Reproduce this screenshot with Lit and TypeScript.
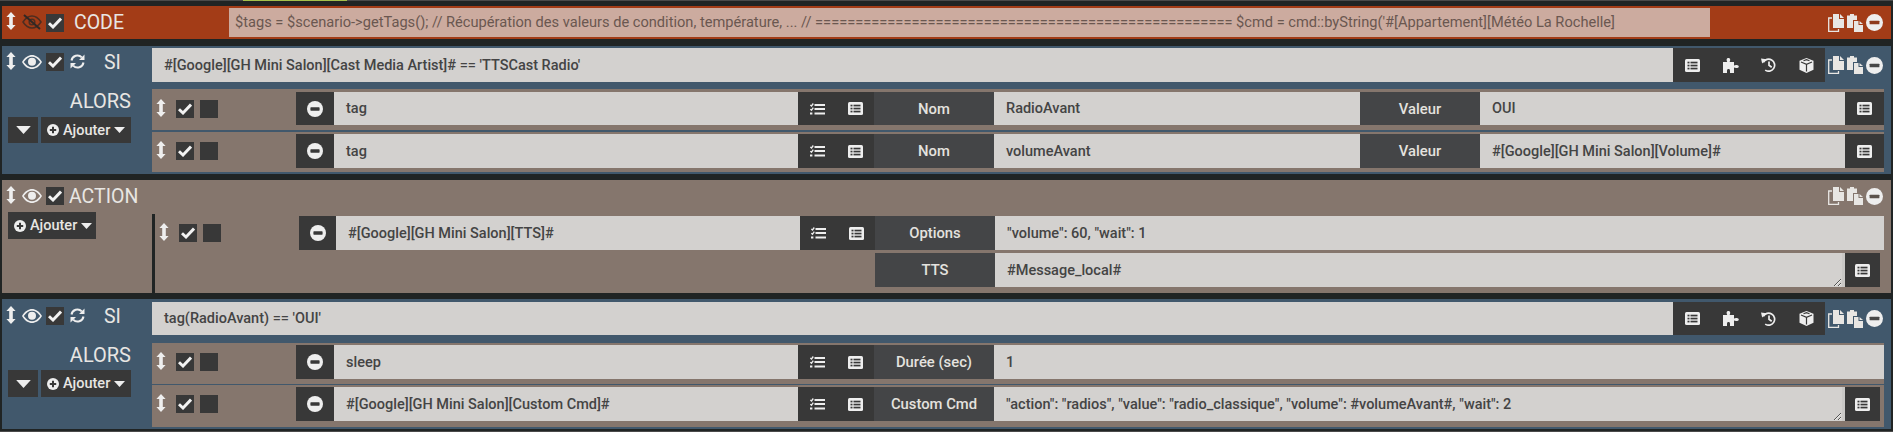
import { LitElement, html, css, svg } from "lit";
import { customElement } from "lit/decorators.js";

const ico = (w: number, h: number, vb: string, body: unknown, cls = "") =>
  html`<svg class="ico ${cls}" width=${w} height=${h} viewBox=${vb}>${body}</svg>`;

const move = () => ico(10, 18, "0 0 10 18", svg`<path fill="#eeeeee" d="M5 0L9.6 5H6.8V13H9.6L5 18L.4 13H3.2V5H.4Z"/>`, "mv");
const eyeBody = (c: string) => svg`<path fill=${c} fill-rule="evenodd" d="M0 7C3 2 6.5 0 10 0s7 2 10 7c-3 5-6.5 7-10 7S3 12 0 7zM1.8 7c2.6 3.5 5.2 5.2 8.2 5.2s5.6-1.7 8.2-5.2C15.6 3.5 13 1.8 10 1.8S4.4 3.5 1.8 7z"/><circle cx="10" cy="6.8" r="4" fill=${c}/>`;
const eye = () => ico(20, 14, "0 0 20 14", eyeBody("#eeeeee"), "eye");
const eyeOff = () => ico(20, 16, "0 0 20 16", svg`<g transform="translate(0 1)" opacity=".75">${svg`<path fill="none" stroke="#302824" stroke-width="1.5" d="M1 7C4 2.500 7 1 10 1s6 1.500 9 6c-3 4.500-6 6-9 6S4 11.500 1 7z"/><circle cx="10" cy="7" r="2.800" fill="none" stroke="#302824" stroke-width="1.500"/>`}</g><path stroke="#302824" stroke-width="2" d="M2 1L18 15"/>`, "eye");
const check = (on = true) => html`<span class="cb">${on ? ico(14, 12, "0 0 14 12", svg`<path fill="none" stroke="#f2f2f2" stroke-width="2.900" d="M1 6.200L5 10L13 1.600"/>`) : ""}</span>`;
const sync = () => ico(15, 15, "0 0 15 15", svg`<g fill="none" stroke="#eeeeee" stroke-width="2"><path d="M1.500 6.500A6 6 0 0 1 11.800 3.400"/><path d="M13.500 8.500A6 6 0 0 1 3.200 11.600"/></g><path fill="#eeeeee" d="M14.500 .5V6H9zM.5 14.500V9H6z"/>`, "sync");
const minus = (s = 16, fg = "#eeeeee", bg = "#383838") => ico(s, s, "0 0 16 16", svg`<circle cx="8" cy="8" r="8" fill=${fg}/><rect x="3.400" y="6.300" width="9.200" height="3.400" rx=".6" fill=${bg}/>`);
const files = () => ico(16, 18, "0 0 16 18", svg`<path fill="#e8e6e3" d="M5 0H11V5H16V14H5z"/><path fill="#e8e6e3" d="M12 0L16 4H12z"/><path fill="none" stroke="#e8e6e3" stroke-width="1.300" d="M4 4H.7V17.300H10.500V15"/>`);
const paste = () => ico(16, 18, "0 0 16 18", svg`<path fill="#e8e6e3" d="M0 1.500H3V0H7V1.500H10V6H6V14H0z"/><path fill="#e8e6e3" d="M7 7H11.500V11H16V18H7z"/><path fill="#e8e6e3" d="M12.500 7L16 10H12.500z"/>`);
const listAlt = () => ico(15, 13, "0 0 15 13", svg`<rect width="15" height="13" rx="1.500" fill="#eeeeee"/><g fill="#383838"><rect x="2.500" y="2.700" width="2" height="1.700"/><rect x="2.500" y="5.700" width="2" height="1.700"/><rect x="2.500" y="8.700" width="2" height="1.700"/><rect x="5.500" y="2.700" width="7" height="1.700"/><rect x="5.500" y="5.700" width="7" height="1.700"/><rect x="5.500" y="8.700" width="7" height="1.700"/></g>`);
const tasks = () => ico(15, 12, "0 0 15 12", svg`<g fill="#eeeeee"><rect x="4.500" y="1" width="10.500" height="2"/><rect x="4.500" y="5" width="10.500" height="2"/><rect x="4.500" y="9.500" width="10.500" height="2"/><rect x="0" y="9.500" width="2.400" height="2"/></g><path fill="none" stroke="#eeeeee" stroke-width="1.300" d="M.3 2L1.500 3L3.300 .5M.3 6.200L1.500 7.200L3.300 4.700"/>`);
const puzzle = () => ico(17, 15, "0 0 17 15", svg`<path fill="#eeeeee" d="M1 4H5.200C4.800 3 4.600 2.400 4.600 1.700C4.600 .6 5.400 0 6.400 0S8.200 .6 8.200 1.700C8.200 2.400 8 3 7.600 4H12V7.600C12.800 7.200 13.300 7 14 7C15.600 7 16.800 7.500 16.800 8.500S15.600 10 14 10C13.300 10 12.800 9.800 12 9.500V15H8V13C8 11.500 7.500 11 6.500 11S5 11.500 5 13V15H1z"/>`);
const history = () => ico(15, 14, "0 0 15 14", svg`<path fill="none" stroke="#eeeeee" stroke-width="1.700" d="M2.300 4.400A6 6 0 1 1 4.200 12.100"/><path fill="#eeeeee" d="M0 .6L5.500 1.200L1.200 5.600z"/><path fill="none" stroke="#eeeeee" stroke-width="1.700" d="M8 3.500V7.300L10.700 9.300"/>`);
const cube = () => ico(15, 15, "0 0 15 15", svg`<path fill="#eeeeee" d="M7.500 0L14.500 2.800V11.700L7.500 15L.5 11.700V2.800z"/><path fill="none" stroke="#383838" stroke-width="1.200" d="M2 4L7.500 6.400L13 4M7.500 6.400V13.500M4.500 2.800L7.500 1.700L10.500 2.800"/>`);
const caret = (w = 11, h = 6) => ico(w, h, "0 0 11 6", svg`<path fill="#eeeeee" d="M0 0H11L5.500 6z"/>`);
const plus = () => ico(12, 12, "0 0 12 12", svg`<circle cx="6" cy="6" r="6" fill="#eeeeee"/><path stroke="#383838" stroke-width="2" d="M2.800 6H9.200M6 2.800V9.200"/>`);

const blockTools = (bar: string) => html`<div class="tools">${files()}${paste()}${minus(17, "#eeeeee", bar)}</div>`;
const addBtn = () => html`<div class="btn">${plus()}<span>Ajouter</span>${caret()}</div>`;

interface Field { label: string; value: string; }
interface RowData { cmd: string; fields: Field[]; pad: string; area?: boolean; tail?: boolean; }

const rowHead = (cmd: string) => html`
  <div class="rhead">${move()}${check()}${check(false)}</div>
  <div class="sq minus">${minus()}</div>
  <div class="inp cmd">${cmd}</div>
  <div class="ibar"><span>${tasks()}</span><span>${listAlt()}</span></div>`;

const actionRow = (r: RowData) => html`
  <div class="row ${r.pad}">
    ${rowHead(r.cmd)}
    ${r.fields.map((f, i) => html`
      <div class="lab">${f.label}</div>
      <div class="inp ${r.fields.length === 1 ? "grow" : i === 0 ? "val" : "grow"} ${r.area ? "area" : ""}">${f.value}</div>`)}
    ${r.tail ? html`<div class="sq end ${r.area ? "short" : ""}">${listAlt()}</div>` : ""}
  </div>`;

const siBlock = (cond: string, rows: RowData[], cls: string) => html`
  <section class="block si ${cls}">
    <div class="left">
      <div class="head">${move()}${eye()}${check()}${sync()}<span class="ttl sit">SI</span></div>
      <div class="alors">ALORS</div>
      <div class="btns"><div class="btn small">${caret(15, 8)}</div>${addBtn()}</div>
    </div>
    <div class="right">
      <div class="cond">
        <div class="inp condin">${cond}</div>
        <div class="cbar"><span>${listAlt()}</span><span>${puzzle()}</span><span>${history()}</span><span>${cube()}</span></div>
        ${blockTools("#474747")}
      </div>
      <div class="rows">${rows.map(actionRow)}</div>
    </div>
  </section>`;

@customElement("app-root")
export class AppRoot extends LitElement {
  static styles = css`
    :host { display: block; width: 1893px; height: 432px; overflow: hidden; background: #202424; font-family: Roboto, "Liberation Sans", sans-serif; font-size: 14.5px; box-sizing: border-box; }
    .page { display: flex; flex-direction: column; height: 432px; box-sizing: border-box; padding: 5px 2px 0; gap: 6px; position: relative; border-top: 1px solid #4a4a4a; border-bottom: 1px solid #4a4a4a; }
    .greenmark { position: absolute; left: 243px; top: -1px; width: 104px; height: 1px; background: #a5c04a; }
    .ico { display: block; flex: none; }
    .block { width: 1889px; box-sizing: border-box; flex: none; }
    .code { height: 33px; margin-bottom: 1px; background: #a33c17; display: flex; align-items: center; }
    .code .head { width: 227px; }
    .head { display: flex; align-items: center; padding-left: 4px; height: 22px; box-sizing: border-box; }
    .mv { margin-right: 6px; margin-top: -2px; }
    .code .mv { margin-top: -4px; }
    .eye { margin-right: 4px; margin-top: -1px; }
    .cb { width: 18px; height: 18px; background: #383838; display: flex; align-items: center; justify-content: center; flex: none; }
    .ttl { color: #e8e6e3; font-size: 19.5px; }
    .codet { margin-left: 10px; }
    .sit { margin-left: 19px; }
    .sync { margin-left: 6px; margin-top: -2px; }
    .actt { margin-left: 5px; }
    .codein { width: 1481px; height: 29px; background: #ccab9f; color: #6a5750; line-height: 29px; padding-left: 6px; box-sizing: border-box; font-size: 14.63px; white-space: nowrap; overflow: hidden; }
    .tools { width: 66px; flex: none; box-sizing: border-box; display: flex; align-items: center; gap: 3px; padding-left: 3px; }
    .code .tools { margin-left: 115px; }
    .si { background: #41586c; display: flex; height: 128px; padding-top: 2px; }
    .si.last { height: 130px; padding-top: 3px; }
    .left { width: 150px; flex: none; }
    .si .head { margin-top: 3px; }
    .alors { color: #e8e6e3; font-size: 20px; line-height: 22px; text-align: right; padding-right: 21px; margin-top: 17px; }
    .btns { display: flex; gap: 3px; padding-left: 6px; margin-top: 5px; }
    .si.last .btns { margin-top: 4px; }
    .btn { height: 26px; background: #383838; color: #e8e6e3; display: flex; align-items: center; gap: 4px; padding: 0 6px; box-sizing: border-box; font-size: 14.5px; font-weight: 500; }
    .si.last .btn { height: 27px; }
    .btn.small { width: 30px; justify-content: center; padding: 0; }
    .right { flex: 1; min-width: 0; }
    .cond { display: flex; height: 34px; margin-bottom: 7px; }
    .si.last .cond { height: 33px; margin-bottom: 8px; }
    .condin { flex: 1; background: #c8ced1; padding-left: 13px; }
    .cbar { width: 152px; flex: none; background: #383838; display: flex; }
    .cbar span { flex: 1; display: flex; align-items: center; justify-content: center; }
    .inp { display: flex; align-items: center; color: #444; background: #d3d1cf; font-weight: 500; box-sizing: border-box; white-space: nowrap; overflow: hidden; padding-left: 12px; }
    .rows { display: flex; flex-direction: column; margin-right: 7px; }
    .row { display: flex; background: #85766d; }
    .row.a { padding: 3px 0 5px; height: 41px; box-sizing: border-box; margin-bottom: 2px; }
    .row.b { padding: 2px 0 4px; height: 40px; box-sizing: border-box; }
    .row.c { padding: 2px 0 5px; height: 41px; box-sizing: border-box; margin-bottom: 1px; }
    .row.d { padding: 2px 0 6px; height: 42px; box-sizing: border-box; }
    .row.e { height: 34px; flex: none; }
    .rhead { width: 144px; flex: none; display: flex; align-items: center; padding-left: 4px; box-sizing: border-box; }
    .rhead .mv { margin-right: 10px; }
    .rhead .cb + .cb { margin-left: 6px; }
    .sq { background: #383838; display: flex; align-items: center; justify-content: center; flex: none; }
    .minus { width: 38px; }
    .cmd { width: 464px; flex: none; }
    .ibar { width: 76px; flex: none; background: #383838; display: flex; }
    .ibar span { flex: 1; display: flex; align-items: center; justify-content: center; }
    .lab { width: 120px; flex: none; background: #444547; color: #e4e2df; display: flex; align-items: center; justify-content: center; font-weight: 500; font-size: 14.8px; }
    .val { width: 366px; flex: none; }
    .grow { flex: 1; min-width: 0; }
    .end { width: 39px; }
    .end.short { width: 35px; margin-right: 4px; }
    .area { resize: both; overflow: auto; border-right: 3px solid #c9c8c6; }
    .action { background: #85766d; height: 113px; display: flex; flex-direction: column; }
    .action .head { height: 32px; }
    .action .tools { margin-left: auto; }
    .abody { display: flex; }
    .abody .left { padding-left: 6px; box-sizing: border-box; }
    .abody .btn { width: 88px; height: 27px; }
    .arows { flex: 1; min-width: 0; border-left: 3px solid #202424; display: flex; flex-direction: column; gap: 3px; height: 79px; margin-top: 2px; padding: 2px 7px 0 0; box-sizing: border-box; }
    .r2 { display: flex; height: 34px; flex: none; padding-left: 720px; }
    .arows .minus { width: 37px; }
    .arows .ibar { width: 75px; }
  `;

  render() {
    const row1: RowData[] = [
      { cmd: "tag", pad: "a", tail: true, fields: [{ label: "Nom", value: "RadioAvant" }, { label: "Valeur", value: "OUI" }] },
      { cmd: "tag", pad: "b", tail: true, fields: [{ label: "Nom", value: "volumeAvant" }, { label: "Valeur", value: "#[Google][GH Mini Salon][Volume]#" }] },
    ];
    const row2: RowData[] = [
      { cmd: "sleep", pad: "c", fields: [{ label: "Durée (sec)", value: "1" }] },
      { cmd: "#[Google][GH Mini Salon][Custom Cmd]#", pad: "d", area: true, tail: true, fields: [{ label: "Custom Cmd", value: '"action": "radios", "value": "radio_classique", "volume": #volumeAvant#, "wait": 2' }] },
    ];
    return html`
      <div class="page">
        <div class="greenmark"></div>
        <section class="block code">
          <div class="head">${move()}${eyeOff()}${check()}<span class="ttl codet">CODE</span></div>
          <div class="codein">$tags = $scenario-&gt;getTags(); // Récupération des valeurs de condition, température, ... // ==================================================== $cmd = cmd::byString('#[Appartement][Météo La Rochelle]</div>
          ${blockTools("#8f3a1c")}
        </section>
        ${siBlock("#[Google][GH Mini Salon][Cast Media Artist]# == 'TTSCast Radio'", row1, "first")}
        <section class="block action">
          <div class="head">${move()}${eye()}${check()}<span class="ttl actt">ACTION</span>${blockTools("#5b524c")}</div>
          <div class="abody">
            <div class="left">${addBtn()}</div>
            <div class="arows">
              <div class="row e">
                ${rowHead("#[Google][GH Mini Salon][TTS]#")}
                <div class="lab">Options</div>
                <div class="inp grow">"volume": 60, "wait": 1</div>
              </div>
              <div class="r2">
                <div class="lab">TTS</div>
                <div class="inp grow area">#Message_local#</div>
                <div class="sq end short">${listAlt()}</div>
              </div>
            </div>
          </div>
        </section>
        ${siBlock("tag(RadioAvant) == 'OUI'", row2, "last")}
      </div>
    `;
  }
}
